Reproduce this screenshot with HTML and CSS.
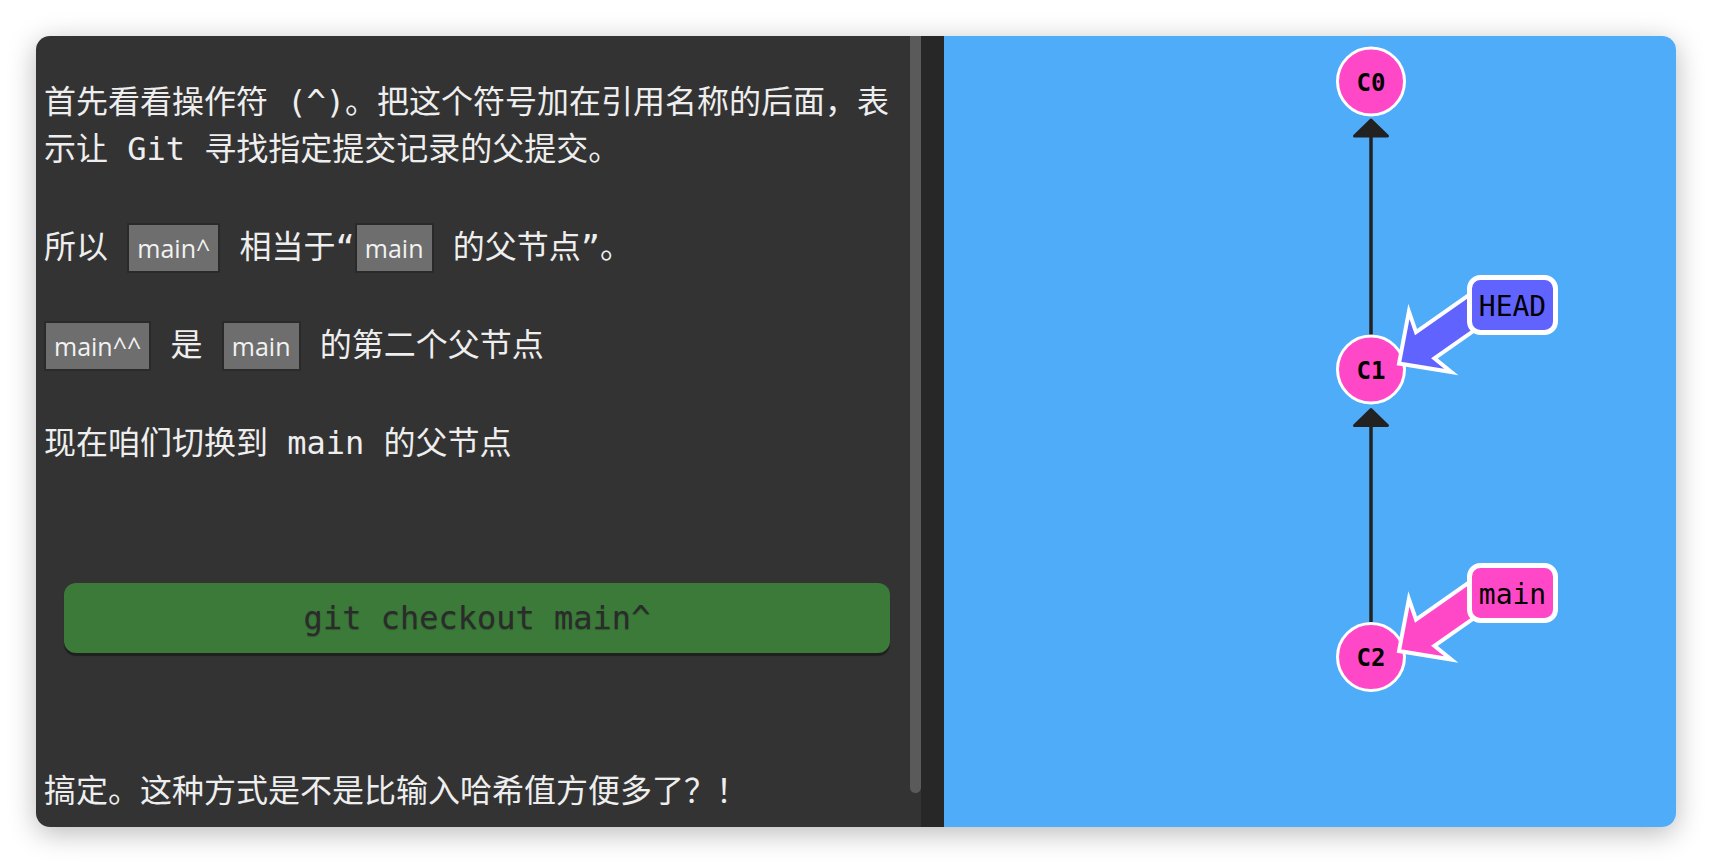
FILE: index.html
```html
<!DOCTYPE html>
<html lang="zh-CN">
<head>
<meta charset="utf-8">
<title>Git 相对引用</title>
<link rel="stylesheet" href="styles.css">
</head>
<body>
<div class="window">
  <div class="left">
    <div class="text">
      <p>首先看看操作符 (^)。把这个符号加在引用名称的后面，表示让 Git 寻找指定提交记录的父提交。</p>
      <p>所以 <code>main^</code> 相当于“<code>main</code> 的父节点”。</p>
      <p><code>main^^</code> 是 <code>main</code> 的第二个父节点</p>
      <p>现在咱们切换到 main 的父节点</p>
      <div class="cmd">git checkout main^</div>
      <p>搞定。这种方式是不是比输入哈希值方便多了？！</p>
    </div>
    <div class="scroll"><div class="thumb"></div></div>
  </div>
  <div class="divider"></div>
  <div class="canvas">
    <svg class="graph" width="732" height="791" viewBox="0 0 732 791">
      <g class="edge">
        <line x1="427" y1="99" x2="427" y2="300"/>
        <path d="M427 84 L443.5 100 L410.5 100 Z"/>
        <line x1="427" y1="388" x2="427" y2="588"/>
        <path d="M427 373.5 L443.5 389.5 L410.5 389.5 Z"/>
      </g>
      <g class="node">
        <circle cx="427" cy="45.5" r="33.5"/>
        <text x="427" y="46.5">C0</text>
      </g>
      <g class="node">
        <circle cx="427" cy="333.5" r="33.5"/>
        <text x="427" y="334.5">C1</text>
      </g>
      <g class="node">
        <circle cx="427" cy="621" r="33.5"/>
        <text x="427" y="622">C2</text>
      </g>
      <path class="arrow head-arrow" d="M0 0 L38 -37 L32 -16 L120 -16 L120 16 L32 16 L38 37 Z" transform="translate(455 327.5) rotate(-35)"/>
      <rect class="label head-label" x="525.5" y="241.5" width="86" height="55" rx="11"/>
      <text class="label-text" x="568.5" y="270">HEAD</text>
      <path class="arrow main-arrow" d="M0 0 L38 -37 L32 -16 L120 -16 L120 16 L32 16 L38 37 Z" transform="translate(455 615) rotate(-35)"/>
      <rect class="label main-label" x="525.5" y="529.5" width="86" height="55" rx="11"/>
      <text class="label-text" x="568.5" y="558">main</text>
    </svg>
  </div>
</div>
</body>
</html>
```

FILE: styles.css
```css
html, body {
  margin: 0;
  padding: 0;
  background: #ffffff;
}

.window {
  margin: 36px;
  width: 1640px;
  height: 791px;
  display: flex;
  border-radius: 14px;
  overflow: hidden;
  box-shadow: 0 6px 28px rgba(0, 0, 0, 0.28);
}

.left {
  flex: none;
  width: 885px;
  display: flex;
  background: #333333;
}

.text {
  flex: none;
  width: 866px;
  padding: 43px 0 0 8px;
  overflow: hidden;
  font-family: "DejaVu Sans Mono", "Noto Sans CJK SC", monospace;
  font-size: 32px;
  line-height: 47px;
  color: #eeeeee;
}

.text p {
  margin: 0 0 51px;
}

.text code {
  font-family: "Open Sans", "Noto Sans CJK SC", sans-serif;
  font-size: 25px;
  line-height: 24px;
  color: #f2f2f2;
  background: #6e6e6e;
  border: 2px solid #2a2a2a;
  padding: 6px 8px;
}

.cmd {
  margin: 116px 20px 115px;
  height: 70px;
  line-height: 70px;
  text-align: center;
  background: #3b7a39;
  border-radius: 12px;
  box-shadow: 0 3px 1px #1f1f1f;
  color: #2b2b2b;
  text-shadow: 0 1px 1px rgba(0, 0, 0, 0.25);
}

.scroll {
  flex: none;
  width: 11px;
}

.thumb {
  height: 757px;
  background: #5a5a5a;
  border-radius: 0 0 6px 6px;
}

.divider {
  flex: none;
  width: 23px;
  background: #272727;
}

.canvas {
  flex: 1;
  background: #4eacf9;
}

.graph {
  display: block;
}

.edge line {
  stroke: #222222;
  stroke-width: 3.5;
}

.edge path {
  fill: #222222;
  stroke: #222222;
  stroke-width: 3;
  stroke-linejoin: round;
}

.node circle {
  fill: #ff48c8;
  stroke: #ffffff;
  stroke-width: 3;
}

.node text {
  font-family: "DejaVu Sans Mono", monospace;
  font-weight: bold;
  font-size: 24px;
  fill: #000000;
  text-anchor: middle;
  dominant-baseline: central;
}

.arrow {
  stroke: #ffffff;
  stroke-width: 4;
  stroke-linejoin: miter;
}

.head-arrow,
.head-label {
  fill: #6163ff;
}

.main-arrow,
.main-label {
  fill: #ff48c8;
}

.label {
  stroke: #ffffff;
  stroke-width: 5;
}

.label-text {
  font-family: "DejaVu Sans Mono", monospace;
  font-size: 28px;
  fill: #000000;
  text-anchor: middle;
  dominant-baseline: central;
}
```
